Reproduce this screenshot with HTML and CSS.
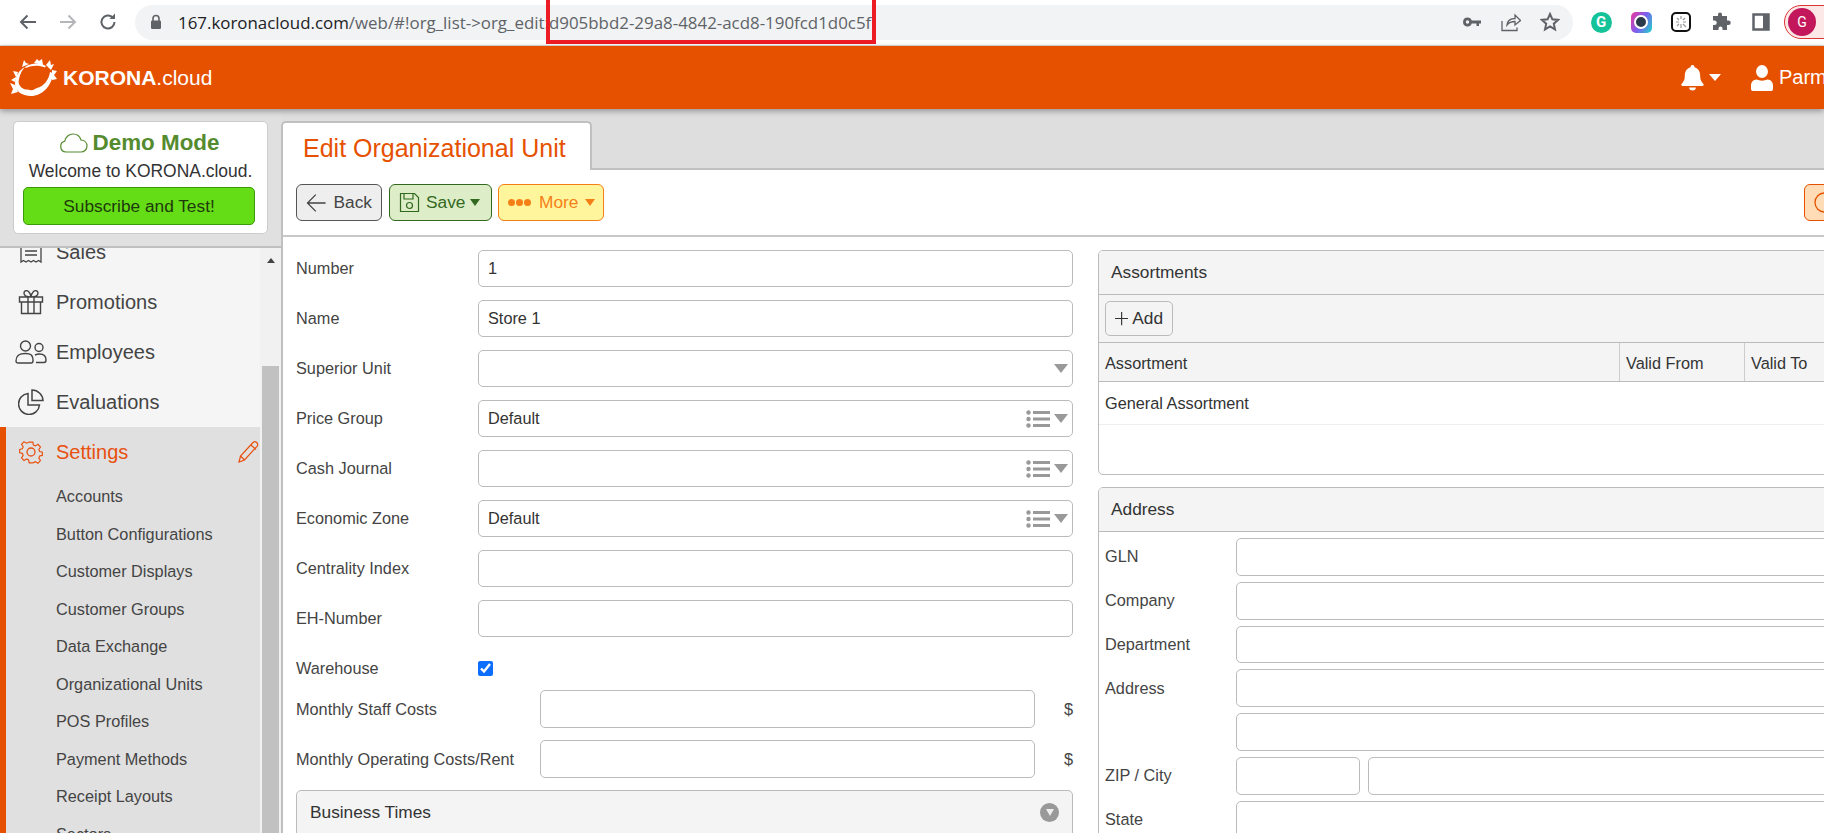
FILE: index.html
```html
<!DOCTYPE html>
<html lang="en">
<head>
  <meta charset="UTF-8" />
  <title>KORONA.cloud - Edit Organizational Unit</title>
  <link rel="stylesheet" href="styles.css">
</head>
<body>
  <svg class="defs" width="0" height="0">
    <symbol id="list" viewBox="0 0 24 18">
      <circle cx="2.5" cy="2.5" r="2.2"/><circle cx="2.5" cy="9" r="2.2"/><circle cx="2.5" cy="15.5" r="2.2"/>
      <rect x="7" y="1" width="17" height="3"/><rect x="7" y="7.5" width="17" height="3"/><rect x="7" y="14" width="17" height="3"/>
    </symbol>
  </svg>

  <!-- browser bar -->
  <div class="chrome">
    <div class="nav-icon">
      <svg width="20" height="20" viewBox="0 0 20 20" fill="none" stroke="#5f6368" stroke-width="2"><path d="M18 10H3M9.500 3.500 3 10l6.500 6.500"/></svg>
    </div>
    <div class="nav-icon">
      <svg width="20" height="20" viewBox="0 0 20 20" fill="none" stroke="#b4b6b9" stroke-width="2"><path d="M2 10h15M10.500 3.500 17 10l-6.500 6.500"/></svg>
    </div>
    <div class="nav-icon">
      <svg width="20" height="20" viewBox="0 0 20 20" fill="none" stroke="#5f6368" stroke-width="2"><path d="M16.500 10a6.500 6.500 0 1 1-2-4.700"/><path d="M17 1.500v5.500h-5.500z" fill="#5f6368" stroke="none"/></svg>
    </div>
    <div class="pill">
      <svg class="lock" width="12" height="16" viewBox="0 0 12 16"><path d="M3 7V4.500a3 3 0 0 1 6 0V7" fill="none" stroke="#5f6368" stroke-width="1.600"/><rect x="1" y="6.500" width="10" height="8.500" rx="1.200" fill="#5f6368"/></svg>
      <span class="url"><b>167.koronacloud.com</b>/web/#!org_list-&gt;org_edit:d905bbd2-29a8-4842-acd8-190fcd1d0c5f</span>
      <svg class="pill-icon" width="20" height="20" viewBox="0 0 20 20" fill="#5f6368"><path d="M5.500 5.500a4.500 4.500 0 0 1 4.300 3H19v3h-2v2.500h-2.500v-2.500H9.800a4.500 4.500 0 1 1-4.300-6zm0 2.800a1.700 1.700 0 1 0 0 3.400 1.700 1.700 0 0 0 0-3.400z"/></svg>
      <svg class="pill-icon" width="20" height="20" viewBox="0 0 20 20" fill="none" stroke="#5f6368" stroke-width="1.300"><path d="M1 9v9.500h15v-3M6 13c.5-4 3.500-6.500 8-6.500V3l5.500 5.500L14 13V9.500c-3.500 0-6 1-8 3.500z"/></svg>
      <svg class="pill-icon" width="20" height="20" viewBox="0 0 20 20" fill="none" stroke="#5f6368" stroke-width="2"><path d="m10 2 2.400 5.300 5.600.6-4.200 3.800 1.200 5.700-5-2.900-5 2.900 1.200-5.700L2 7.900l5.600-.6z"/></svg>
    </div>
    <div class="ext"><span class="ext-g">G</span></div>
    <div class="ext"><span class="ext-lens"><i></i></span></div>
    <div class="ext">
      <svg width="20" height="20" viewBox="0 0 20 20"><rect x="1" y="1" width="18" height="18" rx="4" fill="#fff" stroke="#111" stroke-width="2"/><path d="M6 6l2 2M10 4v3M14 6l-2 2M5 10h3M12 10h3M8 12l-2 2M10 12v4M12 12l3 3" stroke="#999" stroke-width="1.200"/></svg>
    </div>
    <div class="ext">
      <svg width="20" height="20" viewBox="0 0 20 20" fill="#5f6368"><path d="M7 2.500a2 2 0 0 1 4 0V4h5v4.500h1.500a2.200 2.200 0 0 1 0 4.500H16v5H11.500v-1.500a2 2 0 0 0-4 0V18H2v-5h1.500a2.200 2.200 0 0 0 0-4.500H2V4h5z"/></svg>
    </div>
    <div class="ext">
      <svg width="18" height="18" viewBox="0 0 18 18"><rect x="1.500" y="1.500" width="15" height="15" fill="#fff" stroke="#5f6368" stroke-width="2.500"/><rect x="11" y="1" width="6" height="16" fill="#5f6368"/></svg>
    </div>
    <div class="profile"><span class="avatar">G</span></div>
    <div class="red-mark"></div>
  </div>

  <!-- app header -->
  <header class="topbar">
    <div class="brand">
      <svg class="brand-logo" width="48" height="40" viewBox="0 0 48 40" fill="#fff">
        <path d="M15 9C9 12 5 19 5 26c0 7 7 12 16 12 11 0 21-10 22-23l-3-1c-1 8-7 15-13 16-3 1-4 3-7 2-4-1-5 0-8-2-3-3-4-5-3-9 1-5 3-9 6-12z"/>
        <path d="M15 9c5-4 15-5 21-1l-1 1.500C29 7 22 7 16 10z"/>
        <path d="M12 9l2-7 2 3 3 1zM24 5l3-4 2 2 3-2 1 6zM36 7l4-5 1 5 3-1-3 6zM42 12l5 1-3 4 3 4-5 1zM8 14l-5-1 3 6-5 3 4 2zM5 27l-5-2 3 6-2 5 7-2z"/>
      </svg>
      <span class="brand-name"><b>KORONA</b>.cloud</span>
    </div>
    <div class="top-right">
      <svg class="bell" width="23" height="26" viewBox="0 0 24 26" preserveAspectRatio="none" fill="#fff"><path d="M12 0a2 2 0 0 1 2 2.200c4 1 6 4.300 6 8.300 0 4.500 1.500 6.500 3.500 8.500.5 1 0 2-1 2H1.500c-1 0-1.500-1-1-2 2-2 3.500-4 3.500-8.500 0-4 2-7.300 6-8.300A2 2 0 0 1 12 0z"/><path d="M8.500 22.500h7a3.500 3 0 0 1-7 0z"/></svg>
      <span class="caret-white"></span>
      <svg class="user" width="22" height="26" viewBox="0 0 24 26" preserveAspectRatio="none" fill="#fff"><circle cx="12" cy="6.500" r="6.500"/><path d="M6 14.500c3.500 1.500 8.500 1.500 12 0 3.500 0 6 2.800 6 6V24a2 2 0 0 1-2 2H2a2 2 0 0 1-2-2v-3.500c0-3.200 2.500-6 6-6z"/></svg>
      <span class="user-name">Parm</span>
    </div>
  </header>

  <div class="layout">
    <aside class="sidebar">
      <div class="side-top">
        <div class="demo-card">
          <div class="demo-title">
            <svg width="29" height="20" viewBox="0 0 29 20" fill="#fff" stroke="#558b2f" stroke-width="1.200"><path d="M7 19a5.500 5.500 0 0 1-1.200-10.800C6.500 4 10 1 14 1c3.800 0 7 2.500 8 6 3.500.2 6 2.800 6 6 0 3.300-2.700 6-6 6z"/></svg>
            Demo Mode
          </div>
          <div class="demo-text">Welcome to KORONA.cloud.</div>
          <div class="demo-btn">Subscribe and Test!</div>
        </div>
      </div>
      <div class="side-scroll">
        <nav class="menu">
          <div class="menu-item">
            <svg width="26" height="26" viewBox="0 0 26 26" fill="none" stroke="#444" stroke-width="1.300"><path d="M3 3v20l2.500-1.500L8 23l2.500-1.500L13 23l2.500-1.500L18 23l2.500-1.500L23 23V3zM7 8h12M7 12h12M7 16h12"/></svg>
            <span>Sales</span>
          </div>
          <div class="menu-item">
            <svg width="26" height="26" viewBox="0 0 26 26" fill="none" stroke="#444" stroke-width="1.400"><path d="M1.500 8h23v5h-23zM3.500 13v11.500h19V13M10 8v16.500M16 8v16.500M13 8C9 8 6 6.500 6 4s3-3 4.500-1.500S13 6 13 8zM13 8c4 0 7-1.500 7-4s-3-3-4.500-1.500S13 6 13 8z"/></svg>
            <span>Promotions</span>
          </div>
          <div class="menu-item">
            <svg class="users" width="32" height="24" viewBox="0 0 32 24" fill="none" stroke="#444" stroke-width="1.400"><circle cx="10.500" cy="6" r="5"/><path d="M1 21c0-6 4-7.500 9.500-7.500S18 15 18 21c0 1.500-1 2-2 2H3c-1 0-2-.5-2-2z"/><circle cx="24" cy="7.500" r="4"/><path d="M20 15c1.500-.7 3-1 4.500-1 4 0 6.500 2 6.500 6 0 1.500-1 2.500-2 2.500h-8"/></svg>
            <span>Employees</span>
          </div>
          <div class="menu-item">
            <svg width="26" height="26" viewBox="0 0 26 26" fill="none" stroke="#444" stroke-width="1.500"><path d="M10 4.500a10.500 10.500 0 1 0 11.500 11.500H10z"/><path d="M14 1c6 0 11 5 11 10.500H14z"/></svg>
            <span>Evaluations</span>
          </div>
          <div class="menu-group">
            <div class="menu-item active">
              <svg width="26" height="26" viewBox="0 0 26 26" fill="none" stroke="#e8500f" stroke-width="1.300"><circle cx="13" cy="13" r="4"/><path d="M11 2h4l.7 3.200 2.200 1 2.900-1.700 2.700 3-1.800 2.700.9 2.300 3 .7v3.600l-3 .7-.9 2.300 1.800 2.700-2.700 3-2.900-1.700-2.200 1L15 25h-4l-.7-3.200-2.200-1-2.900 1.700-2.700-3 1.800-2.700-.9-2.300-3-.7v-3.600l3-.7.9-2.300-1.800-2.700 2.700-3 2.900 1.700 2.200-1z" transform="translate(1.300 1.300) scale(.9)"/></svg>
              <span>Settings</span>
              <svg class="pencil" width="21" height="22" viewBox="0 0 21 22" fill="none" stroke="#e8500f" stroke-width="1.200"><path d="M1 21l1.500-6L15 1.500c1-1 2.500-1 3.700 0s1.300 2.700.3 3.800L6.500 19zM2.500 15l4 4M13 4l5 4.500"/></svg>
            </div>
            <a class="sub-item">Accounts</a>
            <a class="sub-item">Button Configurations</a>
            <a class="sub-item">Customer Displays</a>
            <a class="sub-item">Customer Groups</a>
            <a class="sub-item">Data Exchange</a>
            <a class="sub-item">Organizational Units</a>
            <a class="sub-item">POS Profiles</a>
            <a class="sub-item">Payment Methods</a>
            <a class="sub-item">Receipt Layouts</a>
            <a class="sub-item">Sectors</a>
          </div>
        </nav>
        <div class="scrollbar">
          <span class="scroll-up"></span>
          <div class="scroll-thumb"></div>
        </div>
      </div>
    </aside>

    <main class="main">
      <div class="tabs">
        <div class="tab">Edit Organizational Unit</div>
      </div>
      <div class="content">
        <div class="toolbar">
          <button class="btn btn-back">
            <svg width="21" height="20" viewBox="0 0 21 20" fill="none" stroke="#444" stroke-width="1.300"><path d="M20 10H1.500M10 1.500 1.500 10l8.500 8.500"/></svg>
            Back
          </button>
          <button class="btn btn-save">
            <svg width="21" height="21" viewBox="0 0 21 21" fill="none" stroke="#33691e" stroke-width="1.200"><path d="M1.500 1.500h14l4 4v14h-18z"/><path d="M5 1.500v5.500h9V1.500"/><circle cx="10.500" cy="13.500" r="3"/></svg>
            Save <span class="caret"></span>
          </button>
          <button class="btn btn-more">
            <span class="dots"><i></i><i></i><i></i></span>
            More <span class="caret"></span>
          </button>
          <button class="btn btn-help">
            <svg width="21" height="21" viewBox="0 0 21 21" fill="none" stroke="#e65100" stroke-width="1.300"><circle cx="10.500" cy="10.500" r="9.500"/></svg>
          </button>
        </div>

        <div class="columns">
          <section class="col-left">
            <div class="row"><label>Number</label><input class="input" type="text" value="1"></div>
            <div class="row"><label>Name</label><input class="input" type="text" value="Store 1"></div>
            <div class="row"><label>Superior Unit</label>
              <div class="input select"><span></span><i class="tri"></i></div>
            </div>
            <div class="row"><label>Price Group</label>
              <div class="input select"><span>Default</span><svg class="list-ico" width="24" height="18"><use href="#list"/></svg><i class="tri"></i></div>
            </div>
            <div class="row"><label>Cash Journal</label>
              <div class="input select"><span></span><svg class="list-ico" width="24" height="18"><use href="#list"/></svg><i class="tri"></i></div>
            </div>
            <div class="row"><label>Economic Zone</label>
              <div class="input select"><span>Default</span><svg class="list-ico" width="24" height="18"><use href="#list"/></svg><i class="tri"></i></div>
            </div>
            <div class="row"><label>Centrality Index</label><input class="input" type="text"></div>
            <div class="row"><label>EH-Number</label><input class="input" type="text"></div>
            <div class="row row-check"><label>Warehouse</label><input class="check" type="checkbox" checked></div>
            <div class="row row-money"><label>Monthly Staff Costs</label><input class="input" type="text"><span class="unit">$</span></div>
            <div class="row row-money"><label>Monthly Operating Costs/Rent</label><input class="input" type="text"><span class="unit">$</span></div>
            <div class="collapsed">
              <span>Business Times</span>
              <span class="round-tri"><i></i></span>
            </div>
          </section>

          <section class="col-right">
            <div class="panel panel-assort">
              <div class="panel-head">Assortments</div>
              <div class="panel-tools">
                <button class="btn-add"><svg width="15" height="15" viewBox="0 0 15 15" stroke="#333" stroke-width="1.300"><path d="M7.500 0v15M0 7.500h15"/></svg>Add</button>
              </div>
              <div class="table-head">
                <div class="cell cell-main">Assortment</div>
                <div class="cell cell-from">Valid From</div>
                <div class="cell cell-to">Valid To</div>
              </div>
              <div class="table-row">General Assortment</div>
            </div>

            <div class="panel">
              <div class="panel-head">Address</div>
              <div class="addr-grid">
                <label>GLN</label><input class="input" type="text">
                <label>Company</label><input class="input" type="text">
                <label>Department</label><input class="input" type="text">
                <label>Address</label><input class="input" type="text">
                <label></label><input class="input" type="text">
                <label>ZIP / City</label>
                <div class="zip-city"><input class="input zip" type="text"><input class="input" type="text"></div>
                <label>State</label><input class="input" type="text">
              </div>
            </div>
          </section>
        </div>
      </div>
    </main>
  </div>
</body>
</html>
```

FILE: styles.css
```css
* {
  box-sizing: border-box;
}

html, body {
  margin: 0;
  height: 833px;
  overflow: hidden;
}

body {
  font-family: "Liberation Sans", Arial, sans-serif;
  font-size: 16.300px;
  color: #444;
  background: #fff;
}

.defs {
  position: absolute;
}

/* browser bar */
.chrome {
  position: relative;
  display: flex;
  align-items: center;
  height: 46px;
  padding: 0 0 1px 8px;
  background: #fff;
  border-bottom: 1px solid #ddd;
  overflow: hidden;
}

.nav-icon, .ext {
  flex: none;
  display: flex;
  align-items: center;
  justify-content: center;
  width: 40px;
  height: 36px;
}

.pill {
  flex: none;
  display: flex;
  align-items: center;
  width: 1438px;
  height: 35px;
  margin: 0 8px 0 7px;
  padding-left: 15px;
  border-radius: 18px;
  background: #f1f3f4;
}

.lock {
  flex: none;
  margin-right: 16px;
}

.url {
  flex: 1;
  font-family: "Open Sans", sans-serif;
  font-size: 16.900px;
  color: #5f6368;
  white-space: nowrap;
}

.url b {
  font-weight: 400;
  color: #202124;
}

.pill-icon {
  flex: none;
  margin-right: 19px;
}

.pill-icon:last-child {
  margin-right: 13px;
}

.ext-g {
  width: 21px;
  height: 21px;
  border-radius: 50%;
  background: #15c39a;
  color: #fff;
  font: 700 15px/21px "Roboto", sans-serif;
  text-align: center;
}

.ext-lens {
  display: flex;
  align-items: center;
  justify-content: center;
  width: 21px;
  height: 21px;
  border-radius: 5px;
  background: linear-gradient(120deg, #f0369a, #7a5ff0 50%, #1dd8c8);
}

.ext-lens i {
  width: 14px;
  height: 14px;
  border-radius: 50%;
  border: 2px solid #fff;
  background: #2b3a4a;
}

.profile {
  flex: none;
  display: flex;
  align-items: center;
  width: 60px;
  height: 34px;
  margin-left: 3px;
  padding-left: 3px;
  border: 1px solid #d33;
  border-radius: 17px;
  background: #fce8e6;
}

.avatar {
  width: 28px;
  height: 28px;
  border-radius: 50%;
  background: #c2185b;
  color: #fff;
  font: 400 14px/28px "Roboto", sans-serif;
  text-align: center;
}

.red-mark {
  position: absolute;
  left: 546px;
  top: 0;
  width: 330px;
  height: 44px;
  border: 4px solid #ed1c24;
  border-top: 0;
}

/* app header */
.topbar {
  position: relative;
  z-index: 2;
  display: flex;
  align-items: center;
  height: 63px;
  padding-left: 10px;
  background: #e65100;
  color: #fff;
  box-shadow: 0 2px 6px rgba(0, 0, 0, 0.35);
  overflow: visible;
}

.brand {
  display: flex;
  align-items: center;
}

.brand-name {
  margin-left: 5px;
  font-size: 21px;
}

.top-right {
  display: flex;
  align-items: center;
  flex: none;
  width: 143px;
  margin-left: auto;
  overflow: hidden;
}

.top-right > * {
  flex: none;
}

.caret-white {
  margin-left: 5px;
  border-top: 7px solid #fff;
  border-left: 6.500px solid transparent;
  border-right: 6.500px solid transparent;
}

.user {
  margin-left: 30px;
}

.user-name {
  margin-left: 6px;
  font-size: 20px;
  white-space: nowrap;
}

.layout {
  display: flex;
  height: 724px;
}

/* sidebar */
.sidebar {
  flex: none;
  width: 281px;
  display: flex;
  flex-direction: column;
  background: #e0e0e0;
}

.side-top {
  flex: none;
  height: 139px;
  padding: 12px 13px 0 13px;
  border-bottom: 2px solid #c0c0c0;
}

.demo-card {
  height: 113px;
  padding: 7px 12px 0 9px;
  background: #fff;
  border: 1px solid #ccc;
  border-radius: 5px;
  text-align: center;
}

.demo-title {
  display: flex;
  align-items: center;
  justify-content: center;
  gap: 5px;
  font-size: 22.400px;
  font-weight: 700;
  line-height: 27px;
  color: #558b2f;
}

.demo-text {
  margin: 4px -3px 0 0;
  font-size: 17.450px;
  line-height: 22px;
  color: #333;
  white-space: nowrap;
}

.demo-btn {
  height: 38px;
  margin-top: 5px;
  border: 1px solid #3c9a0a;
  border-radius: 5px;
  background: #64dd17;
  color: #1e3a0a;
  font-size: 17.300px;
  line-height: 36px;
}

.side-scroll {
  flex: 1;
  display: flex;
  min-height: 0;
  overflow: hidden;
  background: #fff;
}

.menu {
  flex: none;
  width: 260px;
  margin-top: -21px;
  background: #f5f5f5;
}

.menu-item {
  display: flex;
  align-items: center;
  height: 50px;
  font-size: 20px;
  color: #444;
}

.menu-item svg:first-child {
  flex: none;
  margin: 0 12px 0 18px;
}

.menu-item svg.users {
  margin: 0 9px 0 15px;
}

.menu-group {
  border-left: 6px solid #e65100;
  background: #e0e0e0;
  padding-bottom: 20px;
}

.menu-item.active {
  color: #e8500f;
}

.menu-item.active svg:first-child {
  margin-left: 12px;
}

.pencil {
  margin-left: auto;
  margin-right: 1px;
}

.sub-item {
  display: flex;
  align-items: center;
  height: 37.500px;
  padding-left: 50px;
  color: #444;
}

.menu-group .menu-item {
  margin-bottom: 1px;
}

.scrollbar {
  position: relative;
  flex: none;
  width: 21px;
  background: #f1f1f1;
  padding: 0 2px;
}

.scroll-up {
  display: block;
  width: 0;
  margin: 10px auto 0;
  border-bottom: 5px solid #444;
  border-left: 4.500px solid transparent;
  border-right: 4.500px solid transparent;
}

.scroll-thumb {
  width: 17px;
  height: 480px;
  margin-top: 103px;
  background: #c1c1c1;
}

/* main */
.main {
  flex: 1;
  min-width: 0;
  display: flex;
  flex-direction: column;
  overflow: hidden;
}

.tabs {
  flex: none;
  height: 61px;
  padding: 12px 0 0 0;
  background: #dedede;
  border-bottom: 2px solid #c0c0c0;
}

.tab {
  width: 311px;
  height: 49px;
  padding-left: 20px;
  background: #fff;
  border: 2px solid #c0c0c0;
  border-bottom: 0;
  border-radius: 5px 5px 0 0;
  color: #e65100;
  font-size: 25px;
  line-height: 50px;
}

.content {
  flex: 1;
  min-height: 0;
  border-left: 2px solid #c0c0c0;
  background: #fff;
}

.toolbar {
  display: flex;
  align-items: center;
  gap: 6px;
  height: 67px;
  padding: 0 0 0 13px;
  border-bottom: 2px solid #c8c8c8;
}

.btn {
  flex: none;
  display: flex;
  align-items: center;
  height: 37px;
  padding: 0 9px;
  border: 1px solid #555;
  border-radius: 6px;
  font-family: inherit;
  font-size: 17.300px;
}

.btn-back {
  width: 86px;
  gap: 7px;
  background: #eee;
  color: #444;
}

.btn-save {
  width: 103px;
  margin-left: 1px;
  gap: 6px;
  background: #dcedc8;
  border-color: #33691e;
  color: #33691e;
}

.btn-more {
  width: 106px;
  gap: 8px;
  background: #fff59d;
  border-color: #f57f17;
  color: #f57f17;
}

.btn-help {
  width: 60px;
  margin-left: auto;
  margin-right: -40px;
  background: #ffdcb5;
  border-color: #e65100;
}

.caret {
  margin-left: -1px;
  border-top: 7px solid currentColor;
  border-left: 5px solid transparent;
  border-right: 5px solid transparent;
}

.dots {
  display: flex;
  gap: 1px;
}

.dots i {
  width: 7px;
  height: 7px;
  border-radius: 50%;
  background: #f57f17;
}

.columns {
  display: flex;
  gap: 25px;
  padding: 13px 0 0 13px;
}

.col-left {
  flex: none;
  width: 777px;
}

.col-right {
  flex: none;
  width: 800px;
}

.row {
  display: flex;
  align-items: center;
  height: 37px;
  margin-bottom: 13px;
}

.row label {
  flex: none;
  width: 182px;
}

.input {
  flex: 1;
  min-width: 0;
  height: 100%;
  padding: 0 9px;
  border: 1px solid #bbb;
  border-radius: 5px;
  background: #fff;
  font-family: inherit;
  font-size: 16.300px;
  color: #333;
}

.select {
  display: flex;
  align-items: center;
  padding-right: 0;
}

.select span {
  flex: 1;
}

.list-ico {
  flex: none;
  fill: #999;
  margin-right: 4px;
}

.tri {
  flex: none;
  margin-right: 4px;
  border-top: 9px solid #999;
  border-left: 7px solid transparent;
  border-right: 7px solid transparent;
}

.row-check {
  margin-bottom: 3px;
}

.check {
  width: 15px;
  height: 15px;
  margin: 0;
  accent-color: #0d6efd;
}

.row-money {
  height: 38px;
  margin-bottom: 12px;
}

.row-money label {
  width: 244px;
}

.unit {
  flex: none;
  width: 38px;
  text-align: right;
}

.collapsed {
  display: flex;
  justify-content: space-between;
  height: 60px;
  padding: 0 13px;
  border: 1px solid #bbb;
  border-radius: 5px 5px 0 0;
  background: #f4f4f4;
  color: #333;
  font-size: 17.300px;
  line-height: 43px;
}

.round-tri {
  display: flex;
  align-items: center;
  justify-content: center;
  width: 19px;
  height: 19px;
  margin-top: 12px;
  border-radius: 50%;
  background: #999;
}

.round-tri i {
  border-top: 7px solid #eee;
  border-left: 4px solid transparent;
  border-right: 4px solid transparent;
}

/* right panels */
.panel {
  border: 1px solid #bbb;
  border-radius: 5px;
  background: #fff;
  overflow: hidden;
}

.panel-assort {
  height: 225px;
  margin-bottom: 12px;
}

.panel-head {
  height: 44px;
  padding-left: 12px;
  background: #f4f4f4;
  border-bottom: 1px solid #bbb;
  color: #333;
  font-size: 17.300px;
  line-height: 42px;
}

.panel-tools {
  height: 48px;
  padding: 6px;
  background: #f4f4f4;
  border-bottom: 1px solid #bbb;
}

.btn-add {
  display: flex;
  align-items: center;
  gap: 4px;
  width: 68px;
  height: 35px;
  padding: 0 9px;
  border: 1px solid #bbb;
  border-radius: 5px;
  background: #f4f4f4;
  color: #333;
  font-family: inherit;
  font-size: 17.300px;
}

.table-head {
  display: flex;
  height: 39px;
  background: #f4f4f4;
  border-bottom: 1px solid #bbb;
}

.cell {
  padding: 0 6px;
  line-height: 41px;
  color: #333;
}

.cell-main {
  width: 520px;
}

.cell-from {
  width: 125px;
  border-left: 1px solid #ccc;
}

.cell-to {
  flex: 1;
  border-left: 1px solid #ccc;
}

.table-row {
  height: 43px;
  padding-left: 6px;
  border-bottom: 1px solid #eee;
  color: #333;
  line-height: 42px;
}

.addr-grid {
  display: grid;
  grid-template-columns: 131px 1fr;
  grid-auto-rows: 37.750px;
  row-gap: 6px;
  align-items: center;
  padding: 6px 6px 0;
}

.addr-grid .input {
  width: 100%;
}

.zip-city {
  display: flex;
  gap: 8px;
  height: 100%;
}

.zip-city .zip {
  flex: none;
  width: 124px;
}
```
